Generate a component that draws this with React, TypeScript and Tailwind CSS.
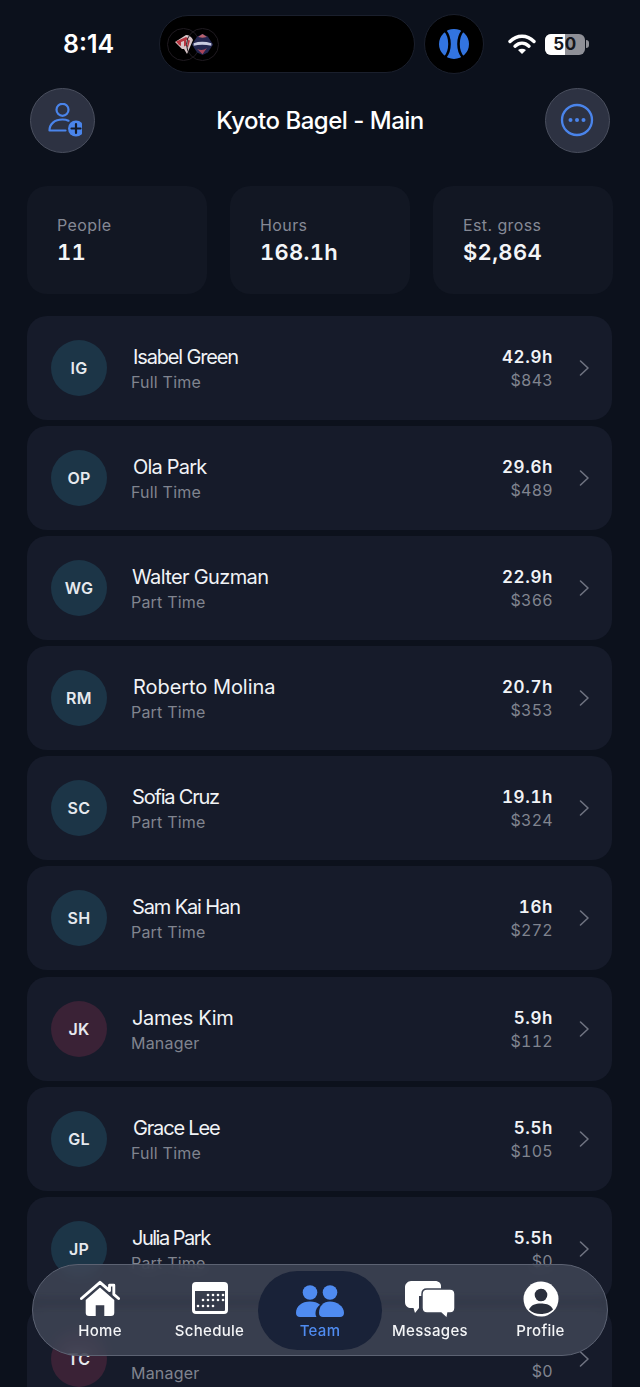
import React from 'react';

interface Member {
    initials: string;
    name: string;
    nameClass: string;
    role: string;
    hours: string;
    pay: string;
}

// last row's name and hours sit under the tab bar, so they stay empty
const members: Member[] = [
    { initials: 'IG', name: 'Isabel Green', nameClass: 'ml-[26px] tracking-[-1.15px]', role: 'Full Time', hours: '42.9h', pay: '$843' },
    { initials: 'OP', name: 'Ola Park', nameClass: 'ml-[26px] tracking-[-0.8px]', role: 'Full Time', hours: '29.6h', pay: '$489' },
    { initials: 'WG', name: 'Walter Guzman', nameClass: 'ml-[25px] tracking-[-0.63px]', role: 'Part Time', hours: '22.9h', pay: '$366' },
    { initials: 'RM', name: 'Roberto Molina', nameClass: 'ml-[26px] tracking-[-0.05px]', role: 'Part Time', hours: '20.7h', pay: '$353' },
    { initials: 'SC', name: 'Sofia Cruz', nameClass: 'ml-[25px] tracking-[-1.2px]', role: 'Part Time', hours: '19.1h', pay: '$324' },
    { initials: 'SH', name: 'Sam Kai Han', nameClass: 'ml-[25px] tracking-[-1.13px]', role: 'Part Time', hours: '16h', pay: '$272' },
    { initials: 'JK', name: 'James Kim', nameClass: 'ml-[25px] tracking-[-0.3px]', role: 'Manager', hours: '5.9h', pay: '$112' },
    { initials: 'GL', name: 'Grace Lee', nameClass: 'ml-[26px] tracking-[-1.18px]', role: 'Full Time', hours: '5.5h', pay: '$105' },
    { initials: 'JP', name: 'Julia Park', nameClass: 'ml-[25px] tracking-[-1.5px]', role: 'Part Time', hours: '5.5h', pay: '$0' },
    { initials: 'TC', name: '', nameClass: '', role: 'Manager', hours: '', pay: '$0' },
];

const stats = [
    { label: 'People', value: '11' },
    { label: 'Hours', value: '168.1h' },
    { label: 'Est. gross', value: '$2,864' },
];

const Row = ({ m }: { m: Member }) => (
    <div className="h-[104px] shrink-0 rounded-[20px] bg-[#161b2a] flex items-center pl-6 pr-[22px]">
        <div
            className={`w-14 h-14 rounded-full flex items-center justify-center text-[16px] font-semibold tracking-[0.3px] text-[#e6e9ee] ${
                m.role === 'Manager' ? 'bg-[#3a2236]' : 'bg-[#1c3547]'
            }`}
        >
            {m.initials}
        </div>
        <div className="flex-1 pt-[1px]">
            <div className={`h-6 text-[20px] leading-6 text-[#f1f3f6] ${m.nameClass}`}>{m.name}</div>
            <div className="ml-6 text-[16px] leading-5 mt-[3px] tracking-[0.2px] text-[#80848f]">{m.role}</div>
        </div>
        <div className="text-right -mt-[1px] tabular-nums">
            <div className="h-6 text-[17px] leading-6 font-semibold tracking-[0.6px] text-[#f1f3f6]">{m.hours}</div>
            <div className="text-[16px] leading-5 mt-[1px] tracking-[0.3px] text-[#80848f]">{m.pay}</div>
        </div>
        <svg className="ml-[25px] w-[12px] h-[18px]" viewBox="0 0 12 18" fill="none">
            <path d="M2.500 2l7.500 7-7.500 7" stroke="#6f7380" strokeWidth="1.600" strokeLinecap="round" strokeLinejoin="round" />
        </svg>
    </div>
);

const StatusBar = () => (
    <div className="h-[87px] shrink-0 flex items-center pt-[1px]">
        <div className="w-[159px] pl-[63px] text-[25px] font-semibold text-white leading-none">8:14</div>
        <div className="w-[256px] h-[58px] rounded-[29px] bg-black border border-[#1a1f2c] flex items-center pl-[7px]">
            <div className="w-[33px] h-[33px] rounded-full border border-[#1f1a20] flex items-center justify-center">
                <svg width="20" height="22" viewBox="0 0 20 22">
                    <path d="M1 9L12 2c3 0 6 2 7 5l-6 14-3-5-2 0z" fill="#d8c6c8" />
                    <path d="M2 8.500l10-4.500 3 2-8 3v4l-2-1zM10 7l2-.5v6l-2 1zM14 7l2 .5-2 7-1-1z" fill="#b5353f" />
                </svg>
            </div>
            <div className="w-[33px] h-[33px] -ml-[14px] rounded-full border border-[#1f1a20] flex items-center justify-center">
                <svg width="23" height="25" viewBox="0 0 26 26">
                    <path d="M13 1l6 3 6 9-6 9-6 3-6-3-6-9 6-9z" fill="#23264f" />
                    <path d="M8 4.500L13 1l5 3.500-5 1z" fill="#b8626e" />
                    <path d="M3 11.500c6-2 13-2 20 0v3c-7-1.500-14-1.500-20 0z" fill="#c9cbe0" />
                    <path d="M7 18c4 2 8 1.500 11-1l-5 7z" fill="#a9455a" />
                </svg>
            </div>
        </div>
        <div className="ml-[9px] w-[60px] h-[60px] rounded-full bg-black border border-[#1a1f2c] flex items-center justify-center">
            <svg width="32" height="32" viewBox="0 0 32 32">
                <circle cx="16" cy="16" r="15" fill="#3274e0" />
                <path d="M7 2.500c6 7 6 20 0 27M25 2.500c-6 7-6 20 0 27" stroke="#000" strokeWidth="2.600" fill="none" />
            </svg>
        </div>
        <svg className="ml-[24px]" width="28" height="22" viewBox="0 0 28 22" fill="none">
            <path d="M2 8.500C9 1.500 19 1.500 26 8.500" stroke="#fff" strokeWidth="3.400" strokeLinecap="round" />
            <path d="M7 13.200c4.300-4 9.700-4 14 0" stroke="#fff" strokeWidth="3.400" strokeLinecap="round" />
            <path d="M14 21l-4-4c2.400-1.800 5.600-1.800 8 0z" fill="#fff" />
        </svg>
        <div className="ml-[9px] relative w-[40px] h-[21px] rounded-[6px] overflow-hidden bg-[#8f9097] flex items-center justify-center">
            <div className="absolute inset-y-0 left-0 w-[20px] bg-white" />
            <span className="relative text-[17px] leading-none font-bold tracking-[0.5px] text-[#14161c]">50</span>
        </div>
        <div className="ml-[1px] w-[3px] h-[8px] rounded-r-full bg-[#8f9097]" />
    </div>
);

const Header = () => (
    <div className="h-[66px] shrink-0 flex items-center justify-between pl-[30px] pr-[30px]">
        <button className="w-[65px] h-[65px] rounded-full bg-[#2d3242] border border-[#4a4f5e] flex items-center justify-center">
            <svg width="38" height="34" viewBox="0 0 38 34" fill="none">
                <circle cx="18.500" cy="6.800" r="6" stroke="#4a84ea" strokeWidth="2.200" />
                <path d="M5.500 27.500c0-6.500 5-11 13-11 2.300 0 4.300.4 6 1.200M5.500 27.500h16" stroke="#4a84ea" strokeWidth="2.200" strokeLinecap="round" />
                <circle cx="32" cy="25.500" r="8" fill="#4a84ea" />
                <path d="M32 21v9M27.500 25.500h9" stroke="#141a28" strokeWidth="2.200" strokeLinecap="round" />
            </svg>
        </button>
        <div className="pt-[2px] text-[24px] tracking-[-0.5px] text-white font-medium">Kyoto Bagel - Main</div>
        <button className="w-[65px] h-[65px] rounded-full bg-[#2d3242] border border-[#4a4f5e] flex items-center justify-center">
            <svg width="34" height="34" viewBox="0 0 34 34" fill="none">
                <circle cx="17" cy="17" r="15" stroke="#4a84ea" strokeWidth="2.300" />
                <circle cx="10.500" cy="17" r="2" fill="#4a84ea" />
                <circle cx="17" cy="17" r="2" fill="#4a84ea" />
                <circle cx="23.500" cy="17" r="2" fill="#4a84ea" />
            </svg>
        </button>
    </div>
);

const tabClass = 'flex flex-col items-center justify-end text-[15px] leading-5 tracking-[0.3px] font-medium';

const TabBar = () => (
    <div className="absolute left-[32px] top-[1264px] w-[576px] h-[92px] rounded-[46px] border border-[#5c6272] bg-[#414758]/80 backdrop-blur-[6px] flex items-center overflow-hidden">
        <div className="absolute inset-x-0 top-[34px] h-[6px] bg-[#2c3140]/40 blur-[3px]" />
        <div className={`relative w-[133px] pl-[1px] h-full pb-[14px] ${tabClass} text-[#f4f5f7]`}>
            <svg width="40" height="37" viewBox="0 0 42 38">
                <path d="M1.500 19L21 2l10 8.700V5h4.500v9.600L40.500 19" stroke="#fff" strokeWidth="3" fill="none" strokeLinecap="round" strokeLinejoin="round" />
                <path fillRule="evenodd" d="M21 7.500L36 20.500V34a3.500 3.500 0 01-3.500 3.500h-23A3.500 3.500 0 016 34V20.500zM16.500 26v11.500h9V26z" fill="#fff" />
            </svg>
            <span className="mt-[4px]">Home</span>
        </div>
        <div className={`relative w-[87px] h-full pb-[14px] ${tabClass} text-[#f4f5f7]`}>
            <svg width="36" height="32" viewBox="0 0 36 32" className="mb-[4px]">
                <path fillRule="evenodd" d="M4 0h28a4 4 0 014 4v24a4 4 0 01-4 4H4a4 4 0 01-4-4V4a4 4 0 014-4zM3 9v19a1 1 0 001 1h28a1 1 0 001-1V9z" fill="#fff" />
                <g fill="#fff">
                    <circle cx="16" cy="13" r="1.300" /><circle cx="21" cy="13" r="1.300" /><circle cx="26" cy="13" r="1.300" /><circle cx="31" cy="13" r="1.300" />
                    <circle cx="11" cy="18" r="1.300" /><circle cx="16" cy="18" r="1.300" /><circle cx="21" cy="18" r="1.300" /><circle cx="26" cy="18" r="1.300" /><circle cx="31" cy="18" r="1.300" />
                    <circle cx="6" cy="24" r="1.300" /><circle cx="11" cy="24" r="1.300" /><circle cx="16" cy="24" r="1.300" /><circle cx="21" cy="24" r="1.300" />
                </g>
            </svg>
            <span className="mt-[3px]">Schedule</span>
        </div>
        <div className={`relative ml-[5px] w-[124px] h-[79px] pb-[9px] rounded-[40px] bg-[#192238] ${tabClass} text-[#4f8bf0]`}>
            <svg width="48" height="33" viewBox="0 0 48 33" className="mb-[3px]" fill="#4f8bf0">
                <circle cx="14" cy="7.500" r="7.300" />
                <circle cx="34" cy="7.500" r="7.300" />
                <path d="M0 28c0-7 6-11.500 14-11.500 4 0 7.500 1.200 10 3.200-2.800 2.300-4.500 5-4.500 8.300 0 1.600.4 3 1 4H4c-2.400 0-4-1.600-4-4z" />
                <path d="M23 28c0-7 4.500-11.500 11-11.500S48 21 48 28c0 2.400-1.600 4-4 4H27c-2.400 0-4-1.600-4-4z" />
            </svg>
            <span>Team</span>
        </div>
        <div className={`relative w-[96px] h-full pb-[14px] ${tabClass} text-[#f4f5f7]`}>
            <svg width="50" height="38" viewBox="0 0 50 38" className="-mb-[1px]">
                <path d="M6 0h24c4 0 6 2.500 6 5v10H14v12l-4 5-1.500-5H6c-3 0-6-2-6-6V6c0-3 3-6 6-6z" fill="#fff" />
                <path d="M22 8h23c3 0 5 2 5 5v14c0 3-2 5-5 5h-2l-1 5.500-6-5.500H22c-3 0-5-2-5-5V13c0-3 2-5 5-5z" fill="#fff" stroke="#3b4151" strokeWidth="1.500" />
            </svg>
            <span className="mt-[3px]">Messages</span>
        </div>
        <div className={`relative w-[125px] h-full pb-[14px] ${tabClass} text-[#f4f5f7]`}>
            <svg width="36" height="36" viewBox="0 0 36 36" className="mb-[1px]">
                <circle cx="18" cy="18" r="17.500" fill="#fff" />
                <circle cx="18" cy="14" r="6.300" fill="#2a2f3c" />
                <path d="M6 28.500C8 24 12.500 22.500 18 22.500S28 24 30 28.500c-3 3-7 4.500-12 4.500S9 31.500 6 28.500z" fill="#2a2f3c" />
            </svg>
            <span className="mt-[3px]">Profile</span>
        </div>
    </div>
);

export default function App() {
    return (
        <div className="relative w-[640px] h-[1387px] overflow-hidden bg-[#0c111c] font-['Inter',sans-serif]">
            <StatusBar />
            <Header />
            <div className="mt-[33px] ml-[27px] w-[586px] grid grid-cols-3 gap-x-[23px]">
                {stats.map((s) => (
                    <div key={s.label} className="h-[108px] rounded-[20px] bg-[#121723] pl-[30px] pt-[29px]">
                        <div className="text-[16px] leading-5 tracking-[0.4px] text-[#858995]">{s.label}</div>
                        <div className="mt-[3px] text-[22px] leading-7 font-semibold tracking-[0.3px] tabular-nums text-[#f4f5f7]">{s.value}</div>
                    </div>
                ))}
            </div>
            <div className="mt-[22px] ml-[27px] w-[585px] flex flex-col gap-[6.100px]">
                {members.map((m) => (
                    <Row key={m.initials} m={m} />
                ))}
            </div>
            <TabBar />
        </div>
    );
}
